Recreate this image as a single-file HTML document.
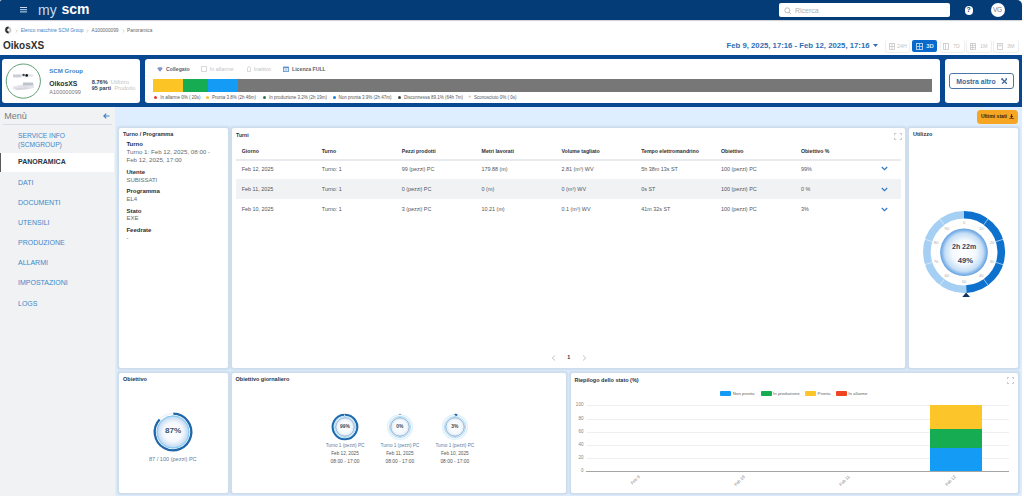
<!DOCTYPE html>
<html><head><meta charset="utf-8">
<style>
*{box-sizing:border-box;margin:0;padding:0}
html,body{width:1024px;height:498px;overflow:hidden;background:#fff;font-family:"Liberation Sans",sans-serif;color:#333}
.a{position:absolute}
.t{position:absolute;white-space:nowrap;line-height:1}
.b{font-weight:bold}
#hdr{left:0;top:0;width:1022px;height:20.1px;box-shadow:0 0.5px 1px rgba(0,20,50,.2);background:#043c78;border-top-right-radius:5px;border-top-left-radius:2px}
#band{left:0;top:55.2px;width:1022px;height:51.6px;background:#074890}
.card{position:absolute;background:#fff;border-radius:3px}
#content{left:0;top:107px;width:1022px;height:388.5px;background:#deeefe}
#side{left:0;top:107px;width:115px;height:388.5px;background:#f0f2f4}
.panel{position:absolute;background:#fff;border-radius:2px;box-shadow:0 0 1.6px 1.2px rgba(160,168,180,.24)}
.pt{position:absolute;white-space:nowrap;line-height:1;font-size:5.2px;font-weight:bold;color:#1f3347}
.mi{position:absolute;left:18px;font-size:7px;color:#4288c9;white-space:nowrap;line-height:1}
.tb{position:absolute;border-radius:2px;box-shadow:0 0.3px 1px 0.3px rgba(0,0,0,.07);background:#fff}
.lg{position:absolute;white-space:nowrap;line-height:1;font-size:4.5px;color:#555}
.dot{position:absolute;width:3px;height:3px;border-radius:50%}
.th{position:absolute;white-space:nowrap;line-height:1;font-size:5.2px;font-weight:bold;color:#2a2f35}
.td{position:absolute;white-space:nowrap;line-height:1;font-size:5.4px;color:#50555b}
.lab{position:absolute;white-space:nowrap;line-height:1;font-size:6px;font-weight:bold;color:#2b3036}
.val{position:absolute;white-space:nowrap;line-height:1;font-size:6px;color:#666b70}
</style></head><body>
<!-- HEADER -->
<div id="hdr" class="a"></div>
<div class="a" style="left:20px;top:7px;width:6.5px;height:1.2px;background:#c9dcf2;box-shadow:0 2.2px 0 #c9dcf2,0 4.4px 0 #c9dcf2"></div>
<div class="t" style="left:38px;top:2.5px;font-size:14px;color:#c8dcf3">my</div>
<div class="t b" style="left:61.5px;top:2px;font-size:14px;color:#fff">scm</div>
<div class="a" style="left:779px;top:3px;width:171px;height:14px;background:#fff;border-radius:2px"></div>
<svg class="a" style="left:784px;top:6.5px" width="8" height="8" viewBox="0 0 8 8"><circle cx="3.3" cy="3.3" r="2.5" fill="none" stroke="#b5b5b5" stroke-width="0.9"/><line x1="5.1" y1="5.1" x2="7" y2="7" stroke="#b5b5b5" stroke-width="0.9"/></svg>
<div class="t" style="left:795px;top:6.5px;font-size:7px;color:#b0b0b0">Ricerca</div>
<div class="a" style="left:964.5px;top:6.3px;width:8.4px;height:8.4px;border-radius:50%;background:#fff"></div>
<div class="t b" style="left:966.5px;top:7.2px;font-size:6.8px;color:#043c78">?</div>
<div class="a" style="left:990.5px;top:3px;width:14px;height:14px;border-radius:50%;background:#fff"></div>
<div class="t" style="left:990.5px;top:3px;width:14px;height:14px;display:flex;align-items:center;justify-content:center;font-size:6.6px;color:#7a7a7a;letter-spacing:-0.2px">VG</div>

<!-- BREADCRUMB -->
<svg class="a" style="left:3.7px;top:25.7px" width="8" height="8" viewBox="0 0 8 8"><circle cx="4" cy="4" r="2.4" fill="none" stroke="#c9c9c9" stroke-width="1.9"/><path d="M4.6 1.6 A2.4 2.4 0 1 0 4.6 6.4" fill="none" stroke="#2c2c2c" stroke-width="2"/></svg>
<svg class="a" style="left:14.8px;top:28.9px" width="3" height="4" viewBox="0 0 3 4"><path d="M0.7 0.4 L2.3 2 L0.7 3.6" fill="none" stroke="#b8b8b8" stroke-width="0.6"/></svg>
<div class="t" style="left:20.8px;top:29.1px;font-size:4.75px;color:#3d7fc1">Elenco macchine SCM Group</div>
<svg class="a" style="left:85.5px;top:28.9px" width="3" height="4" viewBox="0 0 3 4"><path d="M0.7 0.4 L2.3 2 L0.7 3.6" fill="none" stroke="#b8b8b8" stroke-width="0.6"/></svg>
<div class="t" style="left:91.5px;top:29.1px;font-size:4.75px;color:#666">A100000099</div>
<svg class="a" style="left:121.5px;top:28.9px" width="3" height="4" viewBox="0 0 3 4"><path d="M0.7 0.4 L2.3 2 L0.7 3.6" fill="none" stroke="#b8b8b8" stroke-width="0.6"/></svg>
<div class="t" style="left:127px;top:29.1px;font-size:4.75px;color:#666">Panoramica</div>
<div class="t b" style="left:3px;top:41.2px;font-size:10px;color:#2f2f2f">OikosXS</div>

<div class="t b" style="left:726.5px;top:41.9px;font-size:7.75px;color:#2f6fb3">Feb 9, 2025, 17:16 - Feb 12, 2025, 17:16</div>
<svg class="a" style="left:873px;top:44px" width="5" height="3" viewBox="0 0 5 3"><path d="M0 0H5L2.5 3Z" fill="#2f6fb3"/></svg>

<!-- range buttons -->
<div class="tb" style="left:886px;top:40px;width:23px;height:12px"></div>
<div class="a" style="left:912px;top:40px;width:25px;height:11.8px;background:#0a6acb;border-radius:2px"></div>
<div class="tb" style="left:940.5px;top:40px;width:23px;height:12px"></div>
<div class="tb" style="left:967px;top:40px;width:23.5px;height:12px"></div>
<div class="tb" style="left:993.5px;top:40px;width:24.5px;height:12px"></div>
<svg class="a" style="left:889px;top:42.5px" width="6" height="7" viewBox="0 0 6 7"><rect x="0.5" y="0.5" width="5" height="6" fill="none" stroke="#c8c8c8" stroke-width="0.8"/><line x1="0.5" y1="3.5" x2="5.5" y2="3.5" stroke="#c8c8c8" stroke-width="0.8"/><line x1="3" y1="0.5" x2="3" y2="6.5" stroke="#c8c8c8" stroke-width="0.8"/></svg>
<div class="t" style="left:897px;top:43.9px;font-size:5.3px;color:#c4c4c4">24H</div>
<svg class="a" style="left:915.5px;top:42.5px" width="7" height="7" viewBox="0 0 7 7"><rect x="0.5" y="0.5" width="6" height="6" fill="none" stroke="#bcd8f5" stroke-width="0.9"/><line x1="0.5" y1="3.5" x2="6.5" y2="3.5" stroke="#bcd8f5" stroke-width="0.8"/><line x1="3.5" y1="0.5" x2="3.5" y2="6.5" stroke="#bcd8f5" stroke-width="0.8"/></svg>
<div class="t b" style="left:926.3px;top:43.6px;font-size:5.9px;color:#d8e9fb">3D</div>
<svg class="a" style="left:943px;top:42.5px" width="6" height="7" viewBox="0 0 6 7"><rect x="0.5" y="0.5" width="5" height="6" fill="none" stroke="#c8c8c8" stroke-width="0.8"/><line x1="2.5" y1="0.5" x2="2.5" y2="6.5" stroke="#c8c8c8" stroke-width="0.8"/></svg>
<div class="t" style="left:953px;top:43.9px;font-size:5.3px;color:#c4c4c4">7D</div>
<svg class="a" style="left:969.5px;top:42.5px" width="6" height="7" viewBox="0 0 6 7"><rect x="0.5" y="0.5" width="5" height="6" fill="none" stroke="#c8c8c8" stroke-width="0.8"/><line x1="0.5" y1="2.5" x2="5.5" y2="2.5" stroke="#c8c8c8" stroke-width="0.8"/><line x1="0.5" y1="4.5" x2="5.5" y2="4.5" stroke="#c8c8c8" stroke-width="0.8"/><line x1="2.5" y1="0.5" x2="2.5" y2="6.5" stroke="#c8c8c8" stroke-width="0.8"/></svg>
<div class="t" style="left:980px;top:43.9px;font-size:5.3px;color:#c4c4c4">1M</div>
<svg class="a" style="left:997px;top:42.5px" width="6" height="7" viewBox="0 0 6 7"><rect x="0.5" y="0.5" width="5" height="6" fill="none" stroke="#c8c8c8" stroke-width="0.8"/><rect x="1.5" y="1.5" width="3" height="2" fill="#d8d8d8"/></svg>
<div class="t" style="left:1007px;top:43.9px;font-size:5.3px;color:#c4c4c4">3M</div>

<!-- BAND -->
<div id="band" class="a"></div>
<div class="card" style="left:2px;top:59px;width:138px;height:44px"></div>
<div class="card" style="left:144.5px;top:59px;width:795.5px;height:44px"></div>
<div class="card" style="left:945px;top:59px;width:73.5px;height:44px"></div>


<!-- machine card -->
<svg class="a" style="left:5px;top:63px" width="37" height="37" viewBox="0 0 37 37"><circle cx="18.3" cy="18.1" r="17.1" fill="#fff" stroke="#5f9f77" stroke-width="1"/>
<path d="M15 11.2 L26 11 L29 12.3 L27 14 L15 14.2Z" fill="#e6e8ee"/><rect x="8.1" y="11.4" width="7.5" height="3" fill="#c9cdd6"/><circle cx="18.6" cy="11.9" r="1.2" fill="#4a4a4a"/><circle cx="21.7" cy="12.4" r="1.35" fill="#151515"/>
<path d="M8 23.5 L18 21.5 L28.5 21.5 L29 25 L22 26.5 L12 27.2 L8 26Z" fill="#e4e3ea"/><path d="M18 19.6 L28 19.5 L28.5 22.2 L18 22.4Z" fill="#bfc3cb"/><path d="M10 25.5 L22 24 L24 25.5 L13 27Z" fill="#d9d5de"/></svg>
<div class="t b" style="left:49.2px;top:68px;font-size:6.15px;color:#3f82c2">SCM Group</div>
<div class="t b" style="left:49.2px;top:81.2px;font-size:6.85px;color:#2b2f36">OikosXS</div>
<div class="t" style="left:49.2px;top:89.5px;font-size:5.6px;color:#7a7a7a">A100000099</div>
<div class="t b" style="left:91.8px;top:79.6px;font-size:5.6px;color:#3a3f46">8.76%</div>
<div class="t" style="left:110.8px;top:79.6px;font-size:5.7px;color:#c4c4c4">Utilizzo</div>
<div class="t b" style="left:91.8px;top:85.9px;font-size:5.4px;color:#3a3f46">95 parti</div>
<div class="t" style="left:114.4px;top:85.9px;font-size:5.55px;color:#c4c4c4">Prodotto</div>

<!-- status card -->
<svg class="a" style="left:156.5px;top:66.6px" width="6" height="5" viewBox="0 0 6 5"><path d="M0.3 1.6 L1.5 0.3 H4.5 L5.7 1.6 L3 4.7Z" fill="#7f93c9"/></svg>
<div class="t b" style="left:166px;top:66.9px;font-size:5.2px;color:#5a6270">Collegato</div>
<svg class="a" style="left:200.5px;top:66.4px" width="6" height="6" viewBox="0 0 6 6"><rect x="0.6" y="0.6" width="4.8" height="4.8" fill="none" stroke="#cfcfcf" stroke-width="0.8"/></svg>
<div class="t" style="left:209.8px;top:66.9px;font-size:5.4px;color:#c2c2c2">In allarme</div>
<svg class="a" style="left:245.5px;top:66.3px" width="6" height="6" viewBox="0 0 6 6"><path d="M1.5 5.5 V2.5 Q1.5 0.7 3 0.7 Q4.5 0.7 4.5 2.5 V5.5Z" fill="none" stroke="#cfcfcf" stroke-width="0.8"/></svg>
<div class="t" style="left:253.7px;top:66.9px;font-size:5.4px;color:#c2c2c2">Inattivo</div>
<svg class="a" style="left:283px;top:66.1px" width="6" height="6" viewBox="0 0 6 6"><rect x="0.5" y="1" width="5" height="4.6" fill="none" stroke="#5a8ccc" stroke-width="0.8"/><rect x="0.5" y="1" width="5" height="1.3" fill="#5a8ccc"/><rect x="1.5" y="3.2" width="3" height="1.5" fill="#a9c6ea"/></svg>
<div class="t b" style="left:292px;top:66.9px;font-size:5.2px;color:#5a6270">Licenza FULL</div>

<div class="a" style="left:153px;top:79px;width:779px;height:12.5px;background:#777777"></div>
<div class="a" style="left:153px;top:79px;width:29.8px;height:12.5px;background:#fcc425"></div>
<div class="a" style="left:182.8px;top:79px;width:25.4px;height:12.5px;background:#16ac52"></div>
<div class="a" style="left:208.2px;top:79px;width:30px;height:12.5px;background:#139bf5"></div>

<div class="dot" style="left:154px;top:95.5px;background:#e53935"></div>
<div class="lg" style="left:160.2px;top:95.6px">In allarme 0% ( 20s)</div>
<div class="dot" style="left:206.2px;top:95.5px;background:#fcc425"></div>
<div class="lg" style="left:212px;top:95.6px">Pronta 3.8% (2h 46m)</div>
<div class="dot" style="left:263px;top:95.5px;background:#1f7a45"></div>
<div class="lg" style="left:269px;top:95.6px">In produzione 3.2% (2h 19m)</div>
<div class="dot" style="left:332.5px;top:95.5px;background:#1f7fd0"></div>
<div class="lg" style="left:338.5px;top:95.6px">Non pronta 3.9% (2h 47m)</div>
<div class="dot" style="left:398.3px;top:95.5px;background:#444"></div>
<div class="lg" style="left:404px;top:95.6px">Disconnessa 89.1% (64h 7m)</div>
<div class="t" style="left:468.3px;top:95.3px;font-size:4.8px;color:#aaa">+</div>
<div class="lg" style="left:474px;top:95.6px">Sconosciuto 0% ( 0s)</div>

<!-- mostra altro -->
<div class="a" style="left:949px;top:73px;width:65.2px;height:16.3px;border:1.3px solid #4a77a8;border-radius:3px"></div>
<div class="t b" style="left:956.3px;top:78.6px;font-size:6.9px;color:#3a6aa0">Mostra altro</div>
<svg class="a" style="left:1000.6px;top:77.5px" width="6.8" height="6.8" viewBox="0 0 8 8"><path d="M1.2 1.2 L6.8 6.8 M6.8 1.2 L1.2 6.8" stroke="#3f6c9e" stroke-width="1.5"/><path d="M0.3 0.3 H3 L0.3 3Z M7.7 7.7 H5 L7.7 5Z M5 0.3 H7.7 V3Z" fill="#3f6c9e"/></svg>

<!-- CONTENT -->
<div id="content" class="a"></div>
<div id="side" class="a"></div>

<!-- SIDEBAR -->
<div class="t" style="left:4.2px;top:111.6px;font-size:9px;color:#767b80">Menù</div>
<svg class="a" style="left:102.5px;top:113px" width="7" height="6" viewBox="0 0 7 6"><path d="M6.5 3 H1 M3.3 0.6 L0.8 3 L3.3 5.4" fill="none" stroke="#3f7fc0" stroke-width="1.1"/></svg>
<div class="a" style="left:3px;top:123.6px;width:109px;height:0.7px;background:#d9dde2"></div>
<div class="mi" style="top:133.0px;font-size:6.7px">SERVICE INFO</div>
<div class="mi" style="top:141.5px;font-size:6.7px">(SCMGROUP)</div>
<div class="a" style="left:0;top:152.6px;width:114.3px;height:19.5px;background:#fff"></div>
<div class="a" style="left:0;top:152.6px;width:1.4px;height:19.5px;background:#5a5a5a"></div>
<div class="mi b" style="top:158.1px;color:#253647">PANORAMICA</div>
<div class="mi" style="top:178.60px">DATI</div>
<div class="mi" style="top:198.75px">DOCUMENTI</div>
<div class="mi" style="top:218.90px">UTENSILI</div>
<div class="mi" style="top:239.05px">PRODUZIONE</div>
<div class="mi" style="top:259.20px">ALLARMI</div>
<div class="mi" style="top:279.35px">IMPOSTAZIONI</div>
<div class="mi" style="top:299.50px">LOGS</div>

<!-- Ultimi stati -->
<div class="a" style="left:977.2px;top:110px;width:41.2px;height:13.7px;background:#f6a623;border-radius:3.5px"></div>
<div class="t b" style="left:981px;top:114.4px;font-size:5.1px;color:#2e2412">Ultimi stati</div>
<svg class="a" style="left:1009.4px;top:113.8px" width="5.2" height="5.6" viewBox="0 0 5.2 5.6"><path d="M2.1 0.2 H3.1 V2.3 H4.3 L2.6 4.1 L0.9 2.3 H2.1Z" fill="#2e2412"/><rect x="0.2" y="4.4" width="4.8" height="1.1" fill="#2e2412"/></svg>

<!-- PANELS -->
<div class="panel" style="left:119.1px;top:128px;width:108.9px;height:240px"></div>
<div class="panel" style="left:231.5px;top:128px;width:673.5px;height:240px"></div>
<div class="panel" style="left:909.3px;top:128px;width:108.7px;height:240px"></div>
<div class="panel" style="left:119.1px;top:373px;width:108.9px;height:119.6px"></div>
<div class="panel" style="left:231.5px;top:373px;width:334.5px;height:119.6px"></div>
<div class="panel" style="left:570.6px;top:373px;width:447.4px;height:119.6px"></div>

<!-- Turno / Programma -->
<div class="pt" style="left:123px;top:132px;font-size:5.5px">Turno / Programma</div>
<div class="lab" style="left:126.4px;top:141.4px">Turno</div>
<div class="val" style="left:126.4px;top:149.3px;font-size:6.2px">Turno 1: Feb 12, 2025, 08:00 -</div>
<div class="val" style="left:126.4px;top:157.0px;font-size:6.2px">Feb 12, 2025, 17:00</div>
<div class="lab" style="left:126.4px;top:169px">Utente</div>
<div class="val" style="left:126.4px;top:176.6px">SUBISSATI</div>
<div class="lab" style="left:126.4px;top:188.2px">Programma</div>
<div class="val" style="left:126.4px;top:195.9px">EL4</div>
<div class="lab" style="left:126.4px;top:207.5px">Stato</div>
<div class="val" style="left:126.4px;top:215.4px">EXE</div>
<div class="lab" style="left:126.4px;top:227px">Feedrate</div>
<div class="val" style="left:126.4px;top:234.6px">-</div>

<!-- Turni table -->
<div class="pt" style="left:236.1px;top:132.9px">Turni</div>
<svg class="a" style="left:893.5px;top:132.5px" width="8" height="7" viewBox="0 0 8 7"><path d="M0.5 2.3 V0.5 H2.3 M5.7 0.5 H7.5 V2.3 M0.5 4.7 V6.5 H2.3 M5.7 6.5 H7.5 V4.7" fill="none" stroke="#aab1b8" stroke-width="0.7"/></svg>
<div class="th" style="left:241.8px;top:149.3px">Giorno</div>
<div class="th" style="left:321.8px;top:149.3px">Turno</div>
<div class="th" style="left:401.7px;top:149.3px">Pezzi prodotti</div>
<div class="th" style="left:481.6px;top:149.3px">Metri lavorati</div>
<div class="th" style="left:561.5px;top:149.3px">Volume tagliato</div>
<div class="th" style="left:641.3px;top:149.3px">Tempo elettromandrino</div>
<div class="th" style="left:721px;top:149.3px">Obiettivo</div>
<div class="th" style="left:800.9px;top:149.3px">Obiettivo %</div>
<div class="a" style="left:235.5px;top:158.8px;width:665.5px;height:1.8px;background:#e8eaed"></div>
<div class="a" style="left:235.5px;top:178.8px;width:665.5px;height:20px;background:#f1f2f4"></div>
<div class="td" style="left:241.8px;top:166.9px">Feb 12, 2025</div>
<div class="td" style="left:321.8px;top:166.9px">Turno: 1</div>
<div class="td" style="left:401.7px;top:166.9px">99 (pezzi) PC</div>
<div class="td" style="left:481.6px;top:166.9px">179.88 (m)</div>
<div class="td" style="left:561.5px;top:166.9px">2.81 (m³) WV</div>
<div class="td" style="left:641.3px;top:166.9px">5h 38m 13s ST</div>
<div class="td" style="left:721.0px;top:166.9px">100 (pezzi) PC</div>
<div class="td" style="left:800.9px;top:166.9px">99%</div>
<svg class="a" style="left:881px;top:166.2px" width="7" height="5" viewBox="0 0 7 5"><path d="M0.8 1 L3.5 3.7 L6.2 1" fill="none" stroke="#2f7bc4" stroke-width="1.2"/></svg>
<div class="td" style="left:241.8px;top:186.7px">Feb 11, 2025</div>
<div class="td" style="left:321.8px;top:186.7px">Turno: 1</div>
<div class="td" style="left:401.7px;top:186.7px">0 (pezzi) PC</div>
<div class="td" style="left:481.6px;top:186.7px">0 (m)</div>
<div class="td" style="left:561.5px;top:186.7px">0 (m³) WV</div>
<div class="td" style="left:641.3px;top:186.7px">0s ST</div>
<div class="td" style="left:721.0px;top:186.7px">100 (pezzi) PC</div>
<div class="td" style="left:800.9px;top:186.7px">0 %</div>
<svg class="a" style="left:881px;top:186.7px" width="7" height="5" viewBox="0 0 7 5"><path d="M0.8 1 L3.5 3.7 L6.2 1" fill="none" stroke="#2f7bc4" stroke-width="1.2"/></svg>
<div class="td" style="left:241.8px;top:206.7px">Feb 10, 2025</div>
<div class="td" style="left:321.8px;top:206.7px">Turno: 1</div>
<div class="td" style="left:401.7px;top:206.7px">3 (pezzi) PC</div>
<div class="td" style="left:481.6px;top:206.7px">10.21 (m)</div>
<div class="td" style="left:561.5px;top:206.7px">0.1 (m³) WV</div>
<div class="td" style="left:641.3px;top:206.7px">41m 32s ST</div>
<div class="td" style="left:721.0px;top:206.7px">100 (pezzi) PC</div>
<div class="td" style="left:800.9px;top:206.7px">3%</div>
<svg class="a" style="left:881px;top:206.7px" width="7" height="5" viewBox="0 0 7 5"><path d="M0.8 1 L3.5 3.7 L6.2 1" fill="none" stroke="#2f7bc4" stroke-width="1.2"/></svg>

<svg class="a" style="left:551px;top:355px" width="5" height="6" viewBox="0 0 5 6"><path d="M4 0.6 L1.2 3 L4 5.4" fill="none" stroke="#b5b5b5" stroke-width="0.8"/></svg>
<div class="t" style="left:567.3px;top:354.9px;font-size:5.3px;color:#333;font-weight:bold">1</div>
<svg class="a" style="left:581.5px;top:355px" width="5" height="6" viewBox="0 0 5 6"><path d="M1 0.6 L3.8 3 L1 5.4" fill="none" stroke="#b5b5b5" stroke-width="0.8"/></svg>

<!-- UTILIZZO -->
<div class="pt" style="left:913px;top:132.4px;font-size:5.5px">Utilizzo</div>
<svg class="a" style="left:919.2px;top:207.2px" width="90" height="92" viewBox="0 0 90 92"><defs><radialGradient id="gd" cx="50%" cy="50%" r="50%"><stop offset="0" stop-color="#ffffff"/><stop offset="0.5" stop-color="#f4f9fe"/><stop offset="0.8" stop-color="#c5def6"/><stop offset="1" stop-color="#5f9fe0"/></radialGradient><radialGradient id="gs" cx="50%" cy="50%" r="50%"><stop offset="0" stop-color="#ffffff"/><stop offset="0.6" stop-color="#f2f7fc"/><stop offset="0.88" stop-color="#cfe2f5"/><stop offset="1" stop-color="#8fb8e0"/></radialGradient></defs><path d="M47.34 82.13 A37.20 37.20 0 1 1 44.99 7.80" fill="none" stroke="#a6cff4" stroke-width="7.6"/><path d="M45.00 7.80 A37.20 37.20 0 0 1 47.34 82.13" fill="none" stroke="#0f71ce" stroke-width="7.6"/><line x1="64.69" y1="17.90" x2="69.10" y2="11.83" stroke="#dbeafa" stroke-width="0.7"/><line x1="76.86" y1="34.65" x2="83.99" y2="32.33" stroke="#dbeafa" stroke-width="0.7"/><line x1="76.86" y1="55.35" x2="83.99" y2="57.67" stroke="#dbeafa" stroke-width="0.7"/><line x1="64.69" y1="72.10" x2="69.10" y2="78.17" stroke="#dbeafa" stroke-width="0.7"/><line x1="25.31" y1="72.10" x2="20.90" y2="78.17" stroke="#e6f1fc" stroke-width="0.7"/><line x1="13.14" y1="55.35" x2="6.01" y2="57.67" stroke="#e6f1fc" stroke-width="0.7"/><line x1="13.14" y1="34.65" x2="6.01" y2="32.33" stroke="#e6f1fc" stroke-width="0.7"/><line x1="25.31" y1="17.90" x2="20.90" y2="11.83" stroke="#e6f1fc" stroke-width="0.7"/><circle cx="45" cy="45" r="27.3" fill="none" stroke="#f6e9dc" stroke-width="0.5" stroke-dasharray="1 1"/><text x="45.00" y="15.60" font-size="4" fill="#a9a9a9" text-anchor="middle" dominant-baseline="central" font-family="Liberation Sans">0</text><text x="62.28" y="21.21" font-size="4" fill="#a9a9a9" text-anchor="middle" dominant-baseline="central" font-family="Liberation Sans">10</text><text x="72.96" y="35.91" font-size="4" fill="#a9a9a9" text-anchor="middle" dominant-baseline="central" font-family="Liberation Sans">20</text><text x="72.96" y="54.09" font-size="4" fill="#a9a9a9" text-anchor="middle" dominant-baseline="central" font-family="Liberation Sans">30</text><text x="62.28" y="68.79" font-size="4" fill="#a9a9a9" text-anchor="middle" dominant-baseline="central" font-family="Liberation Sans">40</text><text x="45.00" y="74.40" font-size="4" fill="#a9a9a9" text-anchor="middle" dominant-baseline="central" font-family="Liberation Sans">50</text><text x="27.72" y="68.79" font-size="4" fill="#a9a9a9" text-anchor="middle" dominant-baseline="central" font-family="Liberation Sans">60</text><text x="17.04" y="54.09" font-size="4" fill="#a9a9a9" text-anchor="middle" dominant-baseline="central" font-family="Liberation Sans">70</text><text x="17.04" y="35.91" font-size="4" fill="#a9a9a9" text-anchor="middle" dominant-baseline="central" font-family="Liberation Sans">80</text><text x="27.72" y="21.21" font-size="4" fill="#a9a9a9" text-anchor="middle" dominant-baseline="central" font-family="Liberation Sans">90</text><circle cx="45" cy="45.3" r="23.8" fill="url(#gd)"/><path d="M47.1 85.6 L51 90.1 L43.3 90.1Z" fill="#0f355f"/></svg>
<div class="t b" style="left:952px;top:243.3px;font-size:7px;color:#2c4866">2h 22m</div>
<div class="t b" style="left:957.8px;top:257px;font-size:7.6px;color:#2c4866">49%</div>
<div class="pt" style="left:123px;top:377px;font-size:5.5px">Obiettivo</div>
<svg class="a" style="left:151.4px;top:410.1px" width="44" height="44" viewBox="0 0 44 44"><defs><radialGradient id="og" cx="50%" cy="50%" r="50%"><stop offset="0" stop-color="#ffffff"/><stop offset="0.6" stop-color="#f4f8fd"/><stop offset="0.9" stop-color="#c9ddf3"/><stop offset="1" stop-color="#9dc0e6"/></radialGradient></defs><path d="M8.62 9.52 A18.30 18.30 0 0 1 21.97 3.70" fill="none" stroke="#eef2f7" stroke-width="1.8"/><path d="M22.32 3.70 A18.30 18.30 0 1 1 8.62 9.52" fill="none" stroke="#2066a8" stroke-width="2.3"/><circle cx="22" cy="22" r="16.2" fill="url(#og)" stroke="#79cdf6" stroke-width="0.9"/></svg>
<div class="t b" style="left:165px;top:427.2px;font-size:8.1px;color:#3a536d">87%</div>
<div class="t" style="left:149px;top:457.2px;font-size:5.57px;color:#5b7ea6">87 / 100 (pezzi) PC</div>
<div class="pt" style="left:235.5px;top:377.2px;font-size:5.5px">Obiettivo giornaliero</div>
<svg class="a" style="left:329.0px;top:410.5px" width="32" height="32" viewBox="0 0 32 32"><defs><radialGradient id="dg99" cx="50%" cy="50%" r="50%"><stop offset="0" stop-color="#ffffff"/><stop offset="0.7" stop-color="#f3f8fd"/><stop offset="1" stop-color="#d5e6f6"/></radialGradient></defs><circle cx="16" cy="16" r="12.3" fill="none" stroke="#e3f1fb" stroke-width="1.6"/><path d="M16.11 3.70 A12.30 12.30 0 1 1 15.23 3.72" fill="none" stroke="#1f6bb0" stroke-width="2.1"/><circle cx="16" cy="16" r="10.6" fill="none" stroke="#86d2f7" stroke-width="0.7"/><circle cx="16" cy="16" r="9.3" fill="url(#dg99)" stroke="#8aa7c4" stroke-width="0.9"/><circle cx="16" cy="3.3" r="0.6" fill="#3a4a5a"/></svg>
<div class="t b" style="left:335.0px;top:424.6px;width:20px;text-align:center;font-size:4.9px;color:#3c4650">99%</div>
<div class="t" style="left:320.0px;top:443.5px;width:50px;text-align:center;font-size:4.63px;color:#5b7ea6">Turno 1 (pezzi) PC</div>
<div class="t" style="left:320.0px;top:452.2px;width:50px;text-align:center;font-size:4.7px;color:#555">Feb 12, 2025</div>
<div class="t" style="left:320.0px;top:459.9px;width:50px;text-align:center;font-size:4.9px;color:#555">08:00 - 17:00</div>
<svg class="a" style="left:383.9px;top:410.5px" width="32" height="32" viewBox="0 0 32 32"><defs><radialGradient id="dg0" cx="50%" cy="50%" r="50%"><stop offset="0" stop-color="#ffffff"/><stop offset="0.7" stop-color="#f3f8fd"/><stop offset="1" stop-color="#d5e6f6"/></radialGradient></defs><circle cx="16" cy="16" r="12.3" fill="none" stroke="#e3f1fb" stroke-width="1.6"/><circle cx="16" cy="16" r="10.6" fill="none" stroke="#86d2f7" stroke-width="0.7"/><circle cx="16" cy="16" r="9.3" fill="url(#dg0)" stroke="#8aa7c4" stroke-width="0.9"/><circle cx="16" cy="3.3" r="0.6" fill="#3a4a5a"/></svg>
<div class="t b" style="left:389.9px;top:424.6px;width:20px;text-align:center;font-size:4.9px;color:#3c4650">0%</div>
<div class="t" style="left:374.9px;top:443.5px;width:50px;text-align:center;font-size:4.63px;color:#5b7ea6">Turno 1 (pezzi) PC</div>
<div class="t" style="left:374.9px;top:452.2px;width:50px;text-align:center;font-size:4.7px;color:#555">Feb 11, 2025</div>
<div class="t" style="left:374.9px;top:459.9px;width:50px;text-align:center;font-size:4.9px;color:#555">08:00 - 17:00</div>
<svg class="a" style="left:438.8px;top:410.5px" width="32" height="32" viewBox="0 0 32 32"><defs><radialGradient id="dg3" cx="50%" cy="50%" r="50%"><stop offset="0" stop-color="#ffffff"/><stop offset="0.7" stop-color="#f3f8fd"/><stop offset="1" stop-color="#d5e6f6"/></radialGradient></defs><circle cx="16" cy="16" r="12.3" fill="none" stroke="#e3f1fb" stroke-width="1.6"/><path d="M16.11 3.70 A12.30 12.30 0 0 1 18.30 3.92" fill="none" stroke="#1f6bb0" stroke-width="2.1"/><circle cx="16" cy="16" r="10.6" fill="none" stroke="#86d2f7" stroke-width="0.7"/><circle cx="16" cy="16" r="9.3" fill="url(#dg3)" stroke="#8aa7c4" stroke-width="0.9"/><circle cx="16" cy="3.3" r="0.6" fill="#3a4a5a"/></svg>
<div class="t b" style="left:444.8px;top:424.6px;width:20px;text-align:center;font-size:4.9px;color:#3c4650">3%</div>
<div class="t" style="left:429.8px;top:443.5px;width:50px;text-align:center;font-size:4.63px;color:#5b7ea6">Turno 1 (pezzi) PC</div>
<div class="t" style="left:429.8px;top:452.2px;width:50px;text-align:center;font-size:4.7px;color:#555">Feb 10, 2025</div>
<div class="t" style="left:429.8px;top:459.9px;width:50px;text-align:center;font-size:4.9px;color:#555">08:00 - 17:00</div>
<div class="pt" style="left:574.5px;top:377.9px;font-size:5.5px">Riepilogo dello stato (%)</div>
<svg class="a" style="left:1006.5px;top:377px" width="7" height="7" viewBox="0 0 7 7"><path d="M0.5 2 V0.5 H2 M5 0.5 H6.5 V2 M0.5 5 V6.5 H2 M5 6.5 H6.5 V5" fill="none" stroke="#aab1b8" stroke-width="0.7"/></svg>
<div class="a" style="left:720.3px;top:391.2px;width:11px;height:5px;background:#139bf5;border-radius:1px"></div>
<div class="t" style="left:732.8px;top:391.6px;font-size:4.4px;color:#666">Non pronta</div>
<div class="a" style="left:760.5px;top:391.2px;width:11px;height:5px;background:#16ac52;border-radius:1px"></div>
<div class="t" style="left:773.0px;top:391.6px;font-size:4.4px;color:#666">In produzione</div>
<div class="a" style="left:805.0px;top:391.2px;width:11px;height:5px;background:#fcc62a;border-radius:1px"></div>
<div class="t" style="left:817.5px;top:391.6px;font-size:4.4px;color:#666">Pronta</div>
<div class="a" style="left:835.7px;top:391.2px;width:11px;height:5px;background:#ee4422;border-radius:1px"></div>
<div class="t" style="left:848.2px;top:391.6px;font-size:4.4px;color:#666">In allarme</div>
<div class="t" style="left:563.5px;top:469.4px;width:20px;text-align:right;font-size:4.6px;color:#858585">0</div>
<div class="t" style="left:563.5px;top:456.2px;width:20px;text-align:right;font-size:4.6px;color:#858585">20</div>
<div class="a" style="left:586.5px;top:458.1px;width:422px;height:0.6px;background:#efefef"></div>
<div class="t" style="left:563.5px;top:443.0px;width:20px;text-align:right;font-size:4.6px;color:#858585">40</div>
<div class="a" style="left:586.5px;top:444.9px;width:422px;height:0.6px;background:#efefef"></div>
<div class="t" style="left:563.5px;top:429.8px;width:20px;text-align:right;font-size:4.6px;color:#858585">60</div>
<div class="a" style="left:586.5px;top:431.7px;width:422px;height:0.6px;background:#efefef"></div>
<div class="t" style="left:563.5px;top:416.6px;width:20px;text-align:right;font-size:4.6px;color:#858585">80</div>
<div class="a" style="left:586.5px;top:418.5px;width:422px;height:0.6px;background:#efefef"></div>
<div class="t" style="left:563.5px;top:403.4px;width:20px;text-align:right;font-size:4.6px;color:#858585">100</div>
<div class="a" style="left:586.5px;top:405.3px;width:422px;height:0.6px;background:#efefef"></div>
<div class="a" style="left:586px;top:471px;width:422.5px;height:0.8px;background:#a5a5a5"></div>
<div class="a" style="left:929.7px;top:405.4px;width:52.2px;height:23.3px;background:#fcc62a"></div>
<div class="a" style="left:929.7px;top:428.7px;width:52.2px;height:18.9px;background:#16ac52"></div>
<div class="a" style="left:929.7px;top:447.6px;width:52.2px;height:23.7px;background:#139bf5"></div>
<div class="t" style="left:638.0px;top:474.5px;font-size:4.2px;color:#777;transform-origin:100% 0;transform:translate(-100%,0) rotate(-45deg)">Feb 9</div>
<div class="t" style="left:743.0px;top:474.5px;font-size:4.2px;color:#777;transform-origin:100% 0;transform:translate(-100%,0) rotate(-45deg)">Feb 10</div>
<div class="t" style="left:847.5px;top:474.5px;font-size:4.2px;color:#777;transform-origin:100% 0;transform:translate(-100%,0) rotate(-45deg)">Feb 11</div>
<div class="t" style="left:953.5px;top:474.5px;font-size:4.2px;color:#777;transform-origin:100% 0;transform:translate(-100%,0) rotate(-45deg)">Feb 12</div>

</body></html>
